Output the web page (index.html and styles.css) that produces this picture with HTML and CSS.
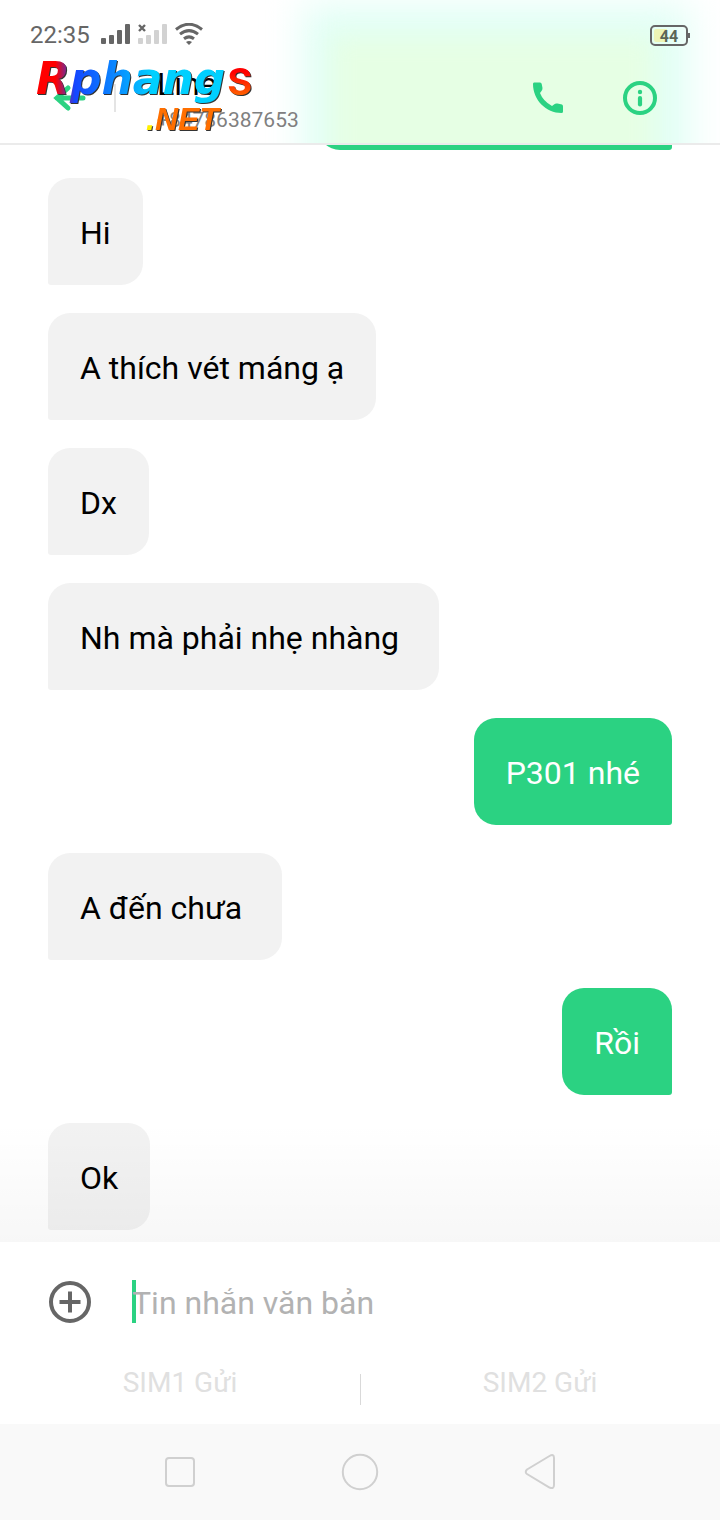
FILE: index.html
```html
<!DOCTYPE html>
<html lang="vi">
<head>
<meta charset="utf-8">
<meta name="viewport" content="width=device-width, initial-scale=1">
<title>Line</title>
<link rel="stylesheet" href="styles.css">
</head>
<body>
<header class="top">
  <div class="glow glow-mint"></div>
  <div class="glow glow-lime"></div>
  <div class="status">
    <span class="time">22:35</span>
    <svg class="signals" width="104" height="24" viewBox="0 0 104 24" aria-hidden="true">
      <g fill="#666">
        <rect x="1" y="15" width="5" height="6" rx="1"/><rect x="9" y="12" width="5" height="9" rx="1"/><rect x="17" y="7" width="5" height="14" rx="1"/><rect x="25" y="1" width="5" height="20" rx="1"/>
      </g>
      <g fill="#d2d2d2">
        <rect x="38" y="15" width="5" height="6" rx="1"/><rect x="46" y="12" width="5" height="9" rx="1"/><rect x="54" y="7" width="5" height="14" rx="1"/><rect x="62" y="1" width="5" height="20" rx="1"/>
      </g>
      <path d="M39 2l6 6M45 2l-6 6" stroke="#666" stroke-width="2.4"/>
      <g fill="none" stroke="#666" stroke-width="3">
        <path d="M76 6.5Q89 -4 102 6.500"/>
        <path d="M80 11.200Q89 4 98 11.200"/>
        <path d="M84 15.800Q89 12 94 15.800"/>
      </g>
      <path d="M86 19Q89 16.800 92 19L89 22z" fill="#666"/>
    </svg>
    <span class="battery"><span class="level">44</span></span>
  </div>
  <div class="bar">
    <button class="icon back" aria-label="Back">
      <svg width="36" height="32" viewBox="0 0 36 32"><path d="M16 6L5 16L16 26M5 16H31" fill="none" stroke="#2bd282" stroke-width="5" stroke-linecap="round"/></svg>
    </button>
    <div class="contact">
      <h1 class="name">Line</h1>
      <p class="number">+84786387653</p>
    </div>
    <button class="icon" aria-label="Call">
      <svg width="32" height="32" viewBox="0 0 32 32"><path d="M2 0.500H8Q9.500 0.500 9.700 2L10.500 6Q10.500 8 9.500 9L8 11Q11 19 20 24L22 22.500Q23.500 21 25.500 21.500L30 22.500Q31 23 31 24.500V29.500Q31 31 29.500 31C14 31 1 18 1 2Q1 0.500 2 0.500z" fill="#2bd282"/></svg>
    </button>
    <button class="icon" aria-label="Info">
      <svg width="36" height="36" viewBox="0 0 36 36"><circle cx="18" cy="18" r="15" fill="none" stroke="#2bd282" stroke-width="4"/><circle cx="18" cy="12" r="2.200" fill="#2bd282"/><path d="M18 18v6.500" stroke="#2bd282" stroke-width="4.200" stroke-linecap="round"/></svg>
    </button>
  </div>
  <svg class="logo" width="236" height="96" viewBox="0 0 236 96" role="img" aria-label="Rphangs.NET">
    <defs>
      <linearGradient id="main" gradientUnits="userSpaceOnUse" x1="6" y1="0" x2="200" y2="0">
        <stop offset="0" stop-color="#f00"/><stop offset=".1" stop-color="#f00"/><stop offset=".2" stop-color="#1446ff"/><stop offset=".42" stop-color="#0a8cff"/><stop offset=".6" stop-color="#00d0ff"/><stop offset="1" stop-color="#00d0ff"/>
      </linearGradient>
      <linearGradient id="tail" x1="0" y1=".4" x2="0" y2=".9">
        <stop offset="0" stop-color="#f00"/><stop offset="1" stop-color="#ff7a00"/>
      </linearGradient>
    </defs>
    <g class="shade">
      <text class="word" x="6" y="46" fill="url(#main)">Rphang</text>
      <text class="ess" x="197" y="47" fill="url(#tail)">s</text>
      <text class="net" x="116" y="82"><tspan fill="#fff000">.</tspan><tspan fill="#ff6f00">NET</tspan></text>
    </g>
  </svg>
</header>

<main class="messages">
  <div class="bubble sent earlier"></div>
  <p class="bubble">Hi</p>
  <p class="bubble">A thích vét máng ạ</p>
  <p class="bubble">Dx</p>
  <p class="bubble">Nh mà phải nhẹ nhàng&nbsp;</p>
  <p class="bubble sent">P301 nhé</p>
  <p class="bubble">A đến chưa&nbsp;</p>
  <p class="bubble sent">Rồi</p>
  <p class="bubble">Ok</p>
</main>

<form class="composer">
  <div class="entry">
    <button class="icon" type="button" aria-label="Add">
      <svg width="44" height="44" viewBox="0 0 44 44"><path d="M22 11.500v21M11.500 22h21" stroke="#666" stroke-width="4"/><circle cx="22" cy="22" r="19" fill="none" stroke="#666" stroke-width="4"/></svg>
    </button>
    <input class="field" type="text" placeholder="Tin nhắn văn bản" aria-label="Tin nhắn văn bản">
  </div>
  <div class="sims">
    <button class="sim" type="button">SIM1 Gửi</button>
    <button class="sim" type="button">SIM2 Gửi</button>
  </div>
</form>

<nav class="system">
  <button class="icon" aria-label="Recent"><svg width="40" height="40" viewBox="0 0 40 40"><rect x="6" y="6" width="28" height="28" rx="3"/></svg></button>
  <button class="icon" aria-label="Home"><svg width="40" height="40" viewBox="0 0 40 40"><circle cx="20" cy="20" r="17.200"/></svg></button>
  <button class="icon" aria-label="Return"><svg width="40" height="40" viewBox="0 0 40 40"><path d="M7 17.500L29.500 4Q34 1.500 34 6V33Q34 37.500 29.500 35.500L7 22Q4.500 20 7 17.500z"/></svg></button>
</nav>
</body>
</html>
```

FILE: styles.css
```css
* { box-sizing: border-box; }

body {
  display: flex;
  flex-direction: column;
  height: 100vh;
  margin: 0;
  background: #fff;
  color: #000;
  font-family: Roboto, "Noto Sans", sans-serif;
}

h1, p { margin: 0; font-weight: 400; }

button {
  padding: 0;
  border: 0;
  background: none;
  font: inherit;
}

svg { display: block; }

.icon { display: flex; align-items: center; justify-content: center; }

/* Header */
.top {
  position: relative;
  flex: none;
  overflow: hidden;
  border-bottom: 2px solid rgba(0, 0, 0, .08);
}

.glow { position: absolute; bottom: -60px; }
.glow-mint { top: 4px; left: 42%; right: 4%; background: #e2fff6; filter: blur(18px); }
.glow-lime { top: 36px; left: 46%; right: 9%; background: #e6ffe4; filter: blur(12px); }

.status {
  position: relative;
  display: flex;
  align-items: center;
  height: 52px;
  padding: 18px 32px 0 30px;
}

.time { color: #666; font-size: 24px; line-height: 36px; }
.signals { margin-left: 10px; }

.battery {
  position: relative;
  width: 38px;
  height: 21px;
  margin-left: auto;
  border: 2px solid #666;
  border-radius: 5px;
  padding: 2px;
}

.battery::after {
  content: "";
  position: absolute;
  top: 6px;
  right: -4px;
  width: 2px;
  height: 5px;
  background: #666;
}

.level {
  display: block;
  height: 13px;
  border-radius: 2px;
  background: linear-gradient(90deg, #edf5b5 44%, transparent 44%);
  color: #5c6657;
  font-size: 16px;
  font-weight: 700;
  line-height: 15px;
  text-align: center;
}

.bar {
  position: relative;
  display: flex;
  align-items: center;
  gap: 58px;
  height: 91px;
  padding: 0 62px 0 52px;
}

.contact {
  position: relative;
  flex: 1;
  padding-top: 6px;
  margin-left: 11px;
}

.contact::before {
  content: "";
  position: absolute;
  top: 25px;
  left: -43px;
  width: 2px;
  height: 28px;
  background: #e4e4e4;
}

.back { width: 36px; }
.name { font-size: 32px; line-height: 38px; }
.number { color: #808080; font-size: 21px; line-height: 34px; }

.logo { position: absolute; top: 48px; left: 30px; }
.shade { filter: drop-shadow(1px 1px 0 #333); }
.word { font-family: "DejaVu Sans", sans-serif; font-size: 44px; font-style: italic; font-weight: 700; }
.ess { font-family: Roboto, sans-serif; font-size: 50px; font-weight: 500; }
.net { font-family: "Liberation Sans", sans-serif; font-size: 32px; font-style: italic; font-weight: 700; }

/* Conversation */
.messages {
  position: relative;
  display: flex;
  flex: 1;
  flex-direction: column;
  align-items: flex-start;
  justify-content: flex-end;
  gap: 28px;
  min-height: 0;
  padding: 0 48px 12px;
  overflow: hidden;
}

.messages::after {
  content: "";
  position: absolute;
  right: 0;
  bottom: 0;
  left: 0;
  height: 120px;
  background: linear-gradient(transparent, rgba(0, 0, 0, .03));
}

.bubble {
  flex: none;
  min-height: 107px;
  padding: 34px 32px 30px;
  border-radius: 22px 22px 22px 3px;
  background: #f2f2f2;
  font-size: 32px;
  line-height: 43px;
}

.sent {
  align-self: flex-end;
  border-radius: 22px 22px 3px 22px;
  background: #2bd282;
  color: #fff;
}

.earlier { width: 354px; }

/* Composer */
.composer { flex: none; padding-bottom: 19px; }

.entry {
  display: flex;
  align-items: center;
  gap: 40px;
  height: 119px;
  padding: 0 48px;
}

.field {
  flex: 1;
  min-width: 0;
  height: 43px;
  padding: 2px 0 0;
  border: 0;
  outline: 0;
  background: linear-gradient(#2bd282, #2bd282) left / 4px 100% no-repeat;
  font: 32px Roboto, "Noto Sans", sans-serif;
}

.field::placeholder { color: #b2b2b2; opacity: 1; }

.sims { display: flex; height: 44px; }

.sim {
  flex: 1;
  color: #e0e0e0;
  font-size: 28px;
  line-height: 40px;
}

.sim + .sim {
  background: linear-gradient(#d9d9d9, #d9d9d9) left bottom / 1px 31px no-repeat;
}

/* System navigation */
.system {
  display: flex;
  flex: none;
  justify-content: center;
  gap: 140px;
  height: 96px;
  background: #f9f9f9;
}

.system svg { fill: none; stroke: #d0d0d0; stroke-width: 2; }
```
